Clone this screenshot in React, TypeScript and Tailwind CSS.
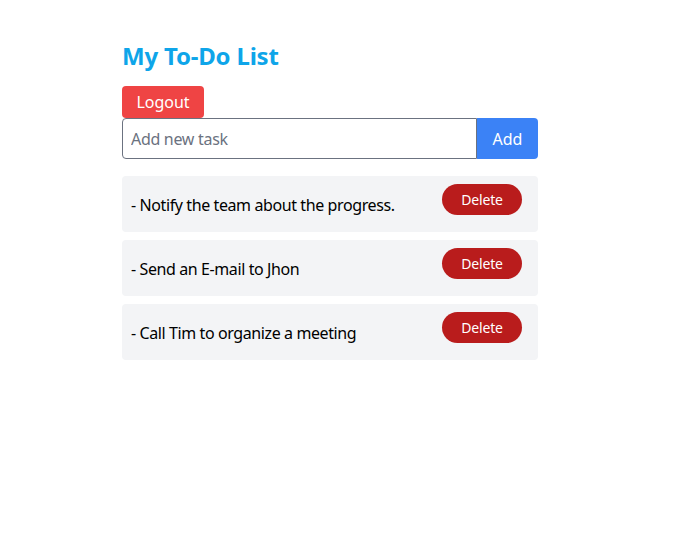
import React from "react";

const tasks = [
  "Notify the team about the progress.",
  "Send an E-mail to Jhon",
  "Call Tim to organize a meeting",
];

export default function App() {
  return (
    <div className="min-h-[537px] bg-white pt-[40px] pl-[122px]" style={{ fontFamily: '"Noto Sans", "Open Sans", sans-serif' }}>
      <div className="w-[416px]">
        <h1 className="text-2xl font-bold leading-8 tracking-[-0.2px] text-[#0ea5e9]">My To-Do List</h1>
        <button className="mt-[14px] h-[32px] w-[82px] rounded bg-[#ef4444] text-base text-white">Logout</button>
        <div className="flex h-[41px]">
          <input
            className="h-full flex-1 rounded-l border border-[#6b7280] px-2 text-base tracking-[-0.3px] outline-none placeholder:text-[#6b7280]"
            placeholder="Add new task"
          />
          <button className="h-full w-[61px] rounded-r bg-[#3b82f6] text-base text-white">Add</button>
        </div>
        <ul className="mt-[17px] flex flex-col gap-[8px]">
          {tasks.map((t) => (
            <li key={t} className="flex h-[56px] items-start justify-between rounded bg-[#f3f4f6] pl-[9px] pr-4 pt-2">
              <span className="pt-[9px] text-base leading-6 tracking-[-0.4px] text-black">- {t}</span>
              <button className="h-[31px] w-[80px] rounded-full bg-[#b91c1c] text-sm tracking-[-0.2px] text-white">Delete</button>
            </li>
          ))}
        </ul>
      </div>
    </div>
  );
}
